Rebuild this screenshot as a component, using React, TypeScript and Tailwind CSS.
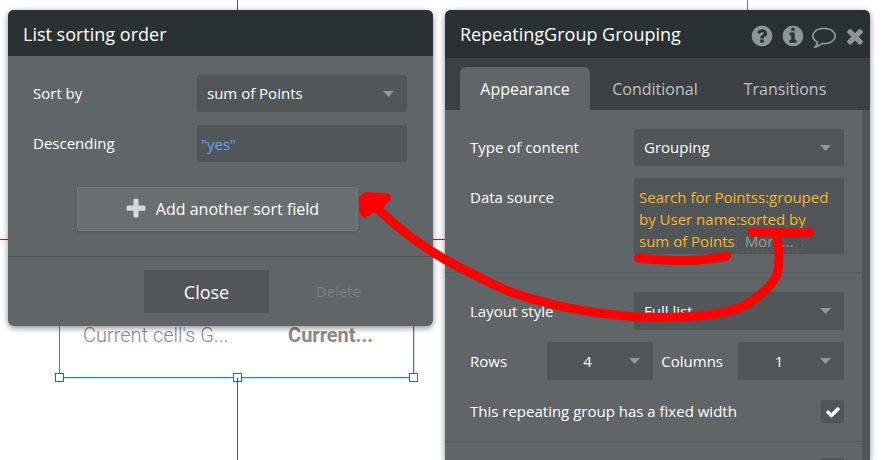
import type { ReactNode } from "react";
import clsx from "clsx";

const iconPaths = {
  help: "M1024 1376v-192q0-14-9-23t-23-9h-192q-14 0-23 9t-9 23v192q0 14 9 23t23 9h192q14 0 23-9t9-23zm256-672q0-88-55.5-163t-138.5-116-170-41q-243 0-371 213-15 24 8 42l132 100q7 6 19 6 16 0 25-12 53-68 86-92 34-24 86-24 48 0 85.5 26t37.5 59q0 38-20 61t-68 45q-63 28-115.5 86.5t-52.5 125.5v36q0 14 9 23t23 9h192q14 0 23-9t9-23q0-19 21.5-49.5t54.5-49.5q32-18 49-28.5t46-35 44.5-48 28-60.5 12.5-81zm384 192q0 209-103 385.5t-279.5 279.5-385.5 103-385.5-103-279.5-279.5-103-385.5 103-385.5 279.5-279.5 385.5-103 385.5 103 279.5 279.5 103 385.5z",
  info: "M1152 1376v-160q0-14-9-23t-23-9h-96v-512q0-14-9-23t-23-9h-320q-14 0-23 9t-9 23v160q0 14 9 23t23 9h96v320h-96q-14 0-23 9t-9 23v160q0 14 9 23t23 9h448q14 0 23-9t9-23zm-128-896v-160q0-14-9-23t-23-9h-192q-14 0-23 9t-9 23v160q0 14 9 23t23 9h192q14 0 23-9t9-23zm640 416q0 209-103 385.5t-279.5 279.5-385.5 103-385.5-103-279.5-279.5-103-385.5 103-385.5 279.5-279.5 385.5-103 385.5 103 279.5 279.5 103 385.5z",
  comment: "M896 384q-204 0-381.5 69.5t-282 187.5-104.5 255q0 112 71.5 213.5t201.5 175.5l87 50-27 96q-24 91-70 172 152-63 275-171l43-38 57 6q69 8 130 8 204 0 381.5-69.5t282-187.5 104.5-255-104.5-255-282-187.5-381.5-69.5zm896 512q0 174-120 321.5t-326 233-450 85.5q-70 0-145-8-198 175-460 242-49 14-114 22h-5q-15 0-27-10.5t-16-27.5v-1q-3-4-.5-12t2-10 4.5-9.5l6-9 7-8.5 8-9q7-8 31-34.5t34.5-38 31-39.5 32.5-51 27-59 26-76q-157-89-247.5-220t-90.5-281q0-174 120-321.5t326-233 450-85.5 450 85.5 326 233 120 321.5z",
  close: "M1490 1322q0 40-28 68l-136 136q-28 28-68 28t-68-28l-294-294-294 294q-28 28-68 28t-68-28l-136-136q-28-28-28-68t28-68l294-294-294-294q-28-28-28-68t28-68l136-136q28-28 68-28t68 28l294 294 294-294q28-28 68-28t68 28l136 136q28 28 28 68t-28 68l-294 294 294 294q28 28 28 68z",
  plus: "M1600 736v192q0 40-28 68t-68 28h-416v416q0 40-28 68t-68 28h-192q-40 0-68-28t-28-68v-416h-416q-40 0-68-28t-28-68v-192q0-40 28-68t68-28h416v-416q0-40 28-68t68-28h192q40 0 68 28t28 68v416h416q40 0 68 28t28 68z",
  check: "M1671 566q0 40-28 68l-724 724-136 136q-28 28-68 28t-68-28l-136-136-362-362q-28-28-28-68t28-68l136-136q28-28 68-28t68 28l294 295 656-657q28-28 68-28t68 28l136 136q28 28 28 68z",
};

const headerActions = [
  { label: "Help", icon: "help" },
  { label: "Info", icon: "info" },
  { label: "Comments", icon: "comment" },
  { label: "Close panel", icon: "close" },
] as const;

const tabs = ["Appearance", "Conditional", "Transitions"];

function Icon({ name, className }: { name: keyof typeof iconPaths; className?: string }) {
  return (
    <svg viewBox="0 0 1792 1792" fill="currentColor" aria-hidden="true" className={className}>
      <path d={iconPaths[name]} />
    </svg>
  );
}

function Panel({ children, className }: { children: ReactNode; className?: string }) {
  return (
    <section className={clsx("relative min-w-0 flex-1 overflow-hidden bg-[#606568] text-white shadow-[0_2px_6px_rgba(0,0,0,0.45)]", className)}>
      {children}
    </section>
  );
}

function Dropdown({ id, value, className, centered }: { id: string; value: string; className?: string; centered?: boolean }) {
  return (
    <div className={clsx("relative shrink-0", className)}>
      <select
        id={id}
        defaultValue={value}
        className={clsx(
          "size-full appearance-none rounded-xs bg-[#515659] text-[15px] outline-none",
          centered ? "pr-6 text-center" : "px-2.5",
        )}
      >
        <option>{value}</option>
      </select>
      <svg viewBox="0 0 11 6" className="pointer-events-none absolute top-4 right-[13px] h-1.5 w-[11px] fill-[#94989a]">
        <path d="M0 0h11L5.500 6z" />
      </svg>
    </div>
  );
}

function SortingPanel() {
  return (
    <Panel className="self-start rounded-md">
      <h2 className="flex h-[46px] items-center bg-[#293133] px-[15px] pt-0.5 text-lg">List sorting order</h2>
      <div className="flex flex-col gap-[13px] pt-[19px] pr-[26px] pl-[25px]">
        <div className="flex items-center justify-between">
          <label htmlFor="sort-by" className="text-[15px]">Sort by</label>
          <Dropdown id="sort-by" value="sum of Points" className="h-[37px] w-[210px]" />
        </div>
        <div className="flex items-center justify-between">
          <label htmlFor="descending" className="text-[15px]">Descending</label>
          <input
            id="descending"
            defaultValue={'"yes"'}
            className="h-[37px] w-[210px] rounded-xs bg-[#515659] px-1 text-[15px] text-[#62a5f8] outline-none"
          />
        </div>
      </div>
      <div className="flex justify-center pt-[25px] pr-1.5 pb-[25px]">
        <button className="flex h-11 w-[281px] items-center justify-center gap-2 rounded-xs border border-[#74797b] bg-[#696e70] pl-2 text-base font-medium shadow-sm">
          <Icon name="plus" className="size-6 text-[#d8d8d8]" />
          Add another sort field
        </button>
      </div>
      <div className="flex justify-end gap-[7px] border-t border-[#4d4f50] py-[13px] pr-8">
        <button className="h-[43px] w-[125px] bg-[#515659] text-lg">Close</button>
        <button disabled className="h-[43px] w-[125px] text-[15px] text-[#7e8081]">Delete</button>
      </div>
    </Panel>
  );
}

function PropertyPanel() {
  return (
    <Panel className="rounded-t-md">
      <header className="flex h-12 items-center justify-between bg-[#293133] pr-[3px] pl-[15px]">
        <h2 className="text-lg">RepeatingGroup Grouping</h2>
        <div className="flex gap-[7px] pt-1 text-[#8b9699]">
          {headerActions.map((action) => (
            <button key={action.icon} aria-label={action.label}>
              <Icon name={action.icon} className="size-6" />
            </button>
          ))}
        </div>
      </header>

      <nav role="tablist" className="flex h-13 items-end bg-[#3b4042] pr-5 pl-[15px]">
        {tabs.map((tab, i) => (
          <button
            key={tab}
            role="tab"
            aria-selected={i === 0}
            className={clsx("h-[43px] flex-1 rounded-t-md text-base", i === 0 ? "bg-[#606568]" : "text-[#c0c2c3]")}
          >
            {tab}
          </button>
        ))}
      </nav>

      <div className="border-r-8 border-[#515659] text-[15px]">
        <div className="flex flex-col gap-3 pt-[19px] pr-[18px] pb-[18px] pl-[25px]">
          <div className="flex items-center justify-between">
            <label htmlFor="content-type">Type of content</label>
            <Dropdown id="content-type" value="Grouping" className="h-[37px] w-[210px]" />
          </div>
          <div className="flex items-start justify-between">
            <span className="pt-2">Data source</span>
            <div className="h-[76px] w-[210px] rounded-xs bg-[#515659] px-[5px] pt-2 leading-[22px] text-[#fdb526]">
              Search for Pointss:grouped by User name:sorted by sum of Points
              <button className="ml-px rounded-sm border border-dashed border-[#5c6164] px-2 leading-5 text-[#999c9e]">More...</button>
            </div>
          </div>
        </div>

        <div className="flex flex-col gap-3 border-t border-[#565b5e] pt-[19px] pr-[18px] pb-[18px] pl-[25px]">
          <div className="flex items-center justify-between">
            <label htmlFor="layout-style">Layout style</label>
            <Dropdown id="layout-style" value="Full list" className="h-[38px] w-[210px]" />
          </div>
          <div className="flex items-center justify-between">
            <label htmlFor="rows" className="w-[68px]">Rows</label>
            <Dropdown id="rows" value="4" centered className="h-[38px] w-[106px]" />
            <label htmlFor="columns" className="w-[68px]">Columns</label>
            <Dropdown id="columns" value="1" centered className="h-[38px] w-[106px]" />
          </div>
          <div className="flex items-center justify-between pt-2">
            <label htmlFor="fixed-width">This repeating group has a fixed width</label>
            <div className="relative size-[23px]">
              <input id="fixed-width" type="checkbox" defaultChecked className="peer block size-full appearance-none rounded-xs bg-[#515659]" />
              <Icon name="check" className="pointer-events-none absolute inset-1 hidden size-4 peer-checked:block" />
            </div>
          </div>
        </div>

        <div className="flex justify-end border-t border-[#565b5e] pt-4 pr-[18px]">
          <input type="checkbox" aria-label="Fixed height" className="size-[23px] appearance-none rounded-xs bg-[#515659]" />
        </div>
      </div>
    </Panel>
  );
}

// Guides and the selected group on the page below the panels
function EditorCanvas() {
  return (
    <div className="absolute inset-0">
      <div className="absolute top-0 left-[237px] h-20 w-px bg-[#e01414]" />
      <div className="absolute top-[239px] left-0 h-px w-1/2 bg-[#e01414]" />
      <div className="absolute top-0 left-[747px] h-20 w-px bg-[#0a9bd4]" />
      <div className="absolute top-[200px] left-[59px] h-[178px] w-[355px] border border-[#1a84e0] shadow-[1px_1px_0_#c5dff5]">
        <div className="flex h-full items-end justify-between pr-10 pb-7 pl-[23px] font-['Roboto',sans-serif] text-xl leading-7 text-[#8a8a8a]">
          <span className="font-light">Current cell's G...</span>
          <span className="font-bold">Current...</span>
        </div>
        <span className="absolute -bottom-[5px] -left-[5px] size-[9px] border border-[#1565f0] bg-white" />
        <span className="absolute -bottom-[5px] left-[173px] size-[9px] border border-[#1565f0] bg-white" />
        <span className="absolute -right-[5px] -bottom-[5px] size-[9px] border border-[#1565f0] bg-white" />
      </div>
      <div className="absolute top-[378px] bottom-0 left-[237px] w-px bg-[#e01414]" />
    </div>
  );
}

function Annotation() {
  return (
    <svg
      viewBox="0 0 890 460"
      width="890"
      height="460"
      fill="none"
      stroke="#ff0000"
      strokeWidth="9"
      strokeLinecap="round"
      strokeLinejoin="round"
      className="pointer-events-none absolute top-0 left-0 max-w-none"
    >
      <path d="M752 232Q780 233 810 232.500" />
      <path d="M638.500 258Q692 264 726.500 256" />
      <path d="M776 236C780 248 779 262 778 270C775 284 762 293 752 301C734 314 700 318 650 317.500C590 315 540 303 508 291C490 283 466 271 444 259C422 246 400 230 380 211" />
      <path d="M361.500 198L362 213L365 215.500L373 210L380 211L383 203L388.500 198.500L388 196L366 194.500Z" fill="#ff0000" strokeWidth="5" />
    </svg>
  );
}

export default function App() {
  return (
    <main className="relative h-screen overflow-hidden bg-white font-['Open_Sans','Noto_Sans',sans-serif]">
      <EditorCanvas />
      <div className="flex h-full gap-3 pt-2.5 pr-5 pl-2">
        <SortingPanel />
        <PropertyPanel />
      </div>
      <Annotation />
    </main>
  );
}
